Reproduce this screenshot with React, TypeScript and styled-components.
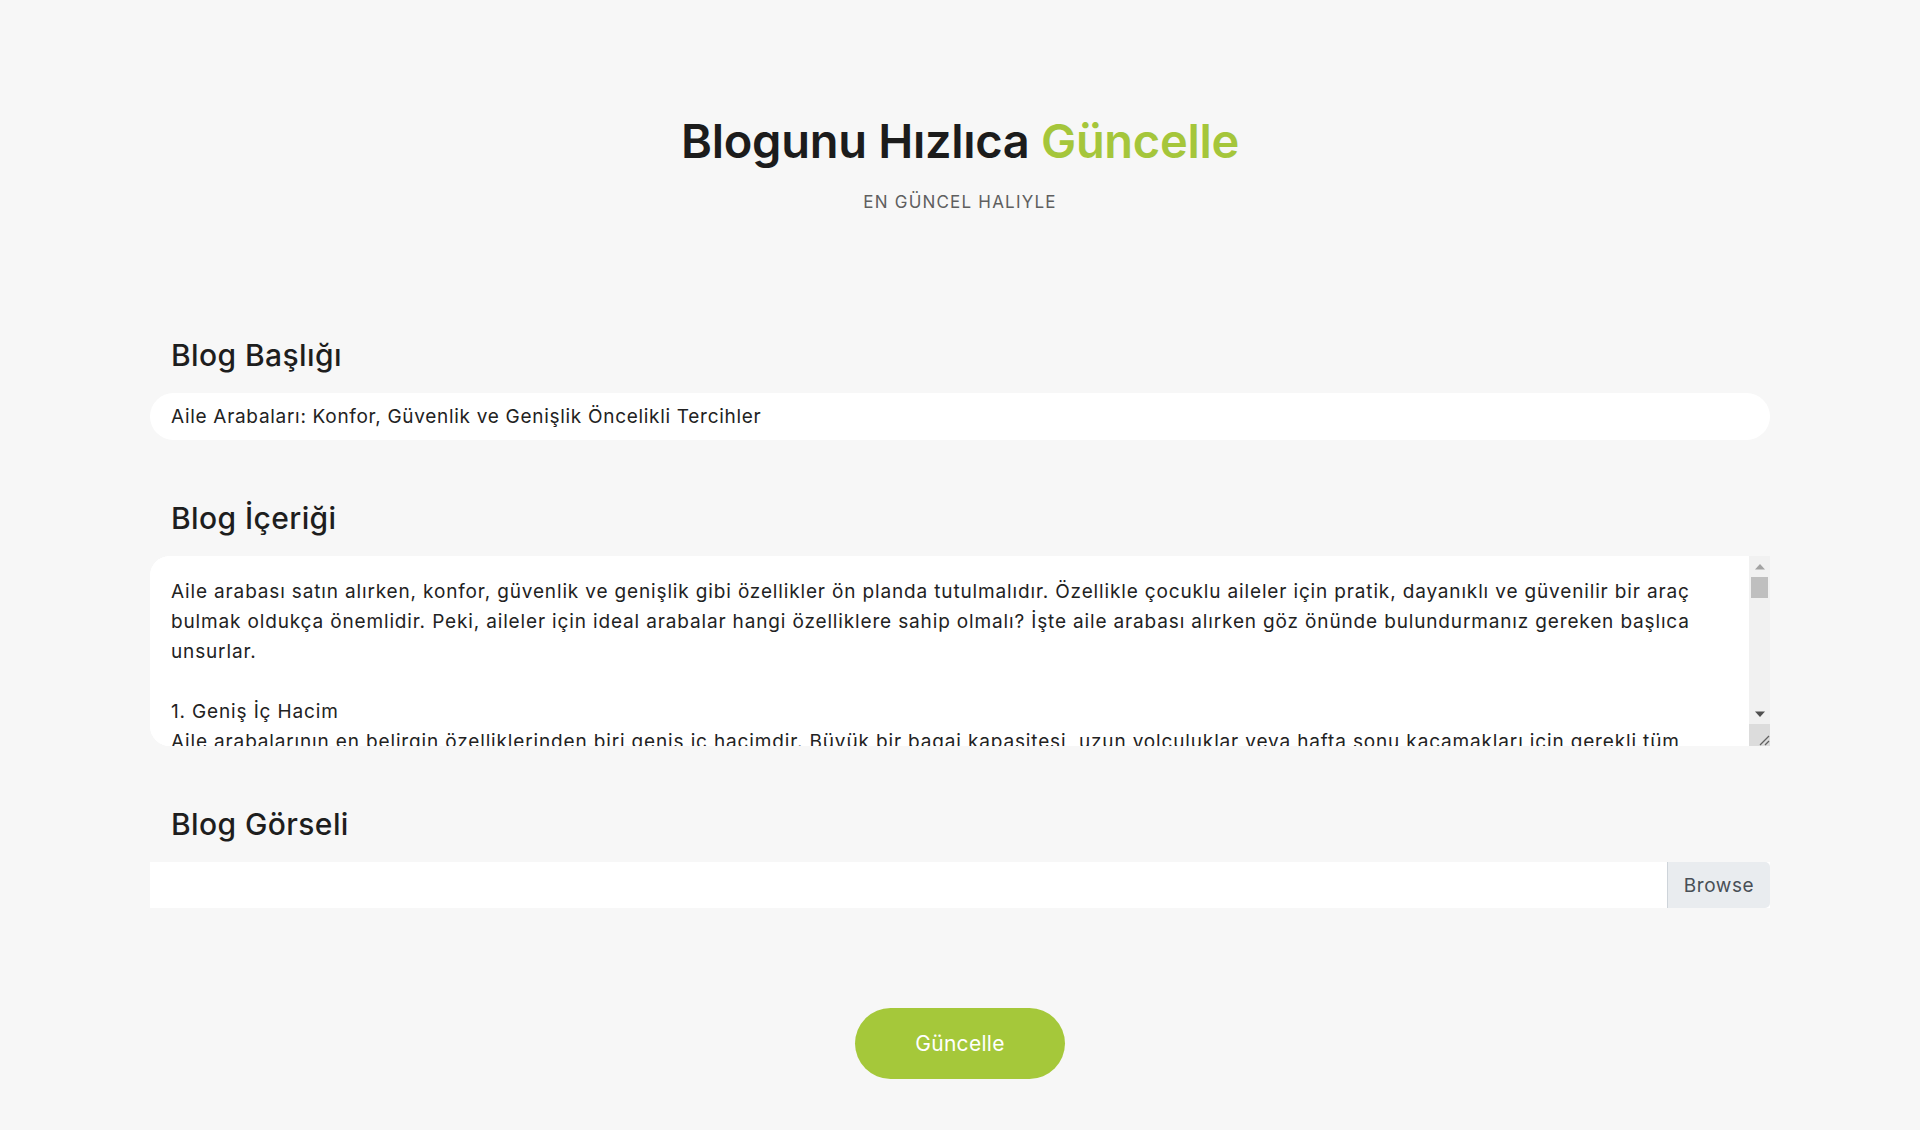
import React from "react";
import styled, { createGlobalStyle } from "styled-components";

const GlobalStyle = createGlobalStyle`
  * { box-sizing: border-box; }
  html, body { margin: 0; padding: 0; background: #f7f7f7; }
  body { font-family: Inter, "Noto Sans", sans-serif; color: #212121; }
`;

const Page = styled.main`
  min-height: 1130px;
  padding-top: 112px;
`;

const Header = styled.header`
  text-align: center;
`;

const Title = styled.h1`
  margin: 0;
  font-size: 47px;
  line-height: 58px;
  font-weight: 600;
  color: #1c1c1c;
  letter-spacing: -0.3px;
`;

const Accent = styled.span`
  color: #a5c63b;
`;

const Subtitle = styled.p`
  margin: 20px 0 0;
  font-size: 17px;
  line-height: 24px;
  letter-spacing: 1.2px;
  color: #5f5f5f;
  text-transform: uppercase;
`;

const Form = styled.form`
  width: 1620px;
  margin: 124px auto 0;
  display: flex;
  flex-direction: column;
`;

const Group = styled.div`
  display: flex;
  flex-direction: column;
  gap: 21px;
  margin-bottom: 61px;
`;

const Label = styled.label`
  padding-left: 21px;
  font-size: 30px;
  line-height: 34px;
  font-weight: 500;
  letter-spacing: 0.4px;
  color: #1e1e1e;
`;

const TextInput = styled.input`
  height: 47px;
  border: 0;
  border-radius: 24px;
  background: #fff;
  padding: 0 21px;
  font-family: Inter, "Noto Sans", sans-serif;
  font-size: 19px;
  letter-spacing: 0.7px;
  color: #222;
  outline: none;
`;

const EditorBox = styled.div`
  display: flex;
  height: 190px;
  background: #fff;
  border-radius: 20px 0 0 20px;
  overflow: hidden;
`;

const TextArea = styled.textarea`
  flex: 1;
  height: 100%;
  border: 0;
  background: #fff;
  padding: 21px 20px 0 21px;
  font-family: Inter, "Noto Sans", sans-serif;
  font-size: 19px;
  letter-spacing: 0.85px;
  line-height: 30px;
  color: #222;
  white-space: pre;
  overflow: hidden;
  scrollbar-width: none;
  outline: none;
  resize: none;
`;

const ScrollRail = styled.div`
  width: 21px;
  display: flex;
  flex-direction: column;
  background: #f1f1f1;
`;

const ArrowCell = styled.div`
  height: 21px;
  display: flex;
  align-items: center;
  justify-content: center;
`;

const Track = styled.div`
  flex: 1;
  display: flex;
  flex-direction: column;
  padding: 0 2px;
`;

const Thumb = styled.div`
  height: 21px;
  background: #bfbfbf;
`;

const ResizeCorner = styled.div`
  height: 22px;
  background: #dcdcdc;
  display: flex;
  align-items: flex-end;
  justify-content: flex-end;
`;

const FileBox = styled.div`
  display: flex;
  height: 46px;
  background: #fff;
`;

const FileName = styled.div`
  flex: 1;
`;

const BrowseButton = styled.span`
  width: 103px;
  display: flex;
  align-items: center;
  justify-content: center;
  background: #e9ecef;
  border-left: 1px solid #ced4da;
  border-radius: 0 5px 5px 0;
  font-size: 19px;
  letter-spacing: 0.6px;
  color: #495057;
`;

const Actions = styled.div`
  display: flex;
  justify-content: center;
  margin-top: 39px;
`;

const SubmitButton = styled.button`
  width: 210px;
  height: 71px;
  border: 0;
  border-radius: 36px;
  background: #a5c83a;
  color: #fff;
  font-family: Inter, "Noto Sans", sans-serif;
  font-size: 21px;
  letter-spacing: 0.3px;
  cursor: pointer;
`;

const content = [
  "Aile arabası satın alırken, konfor, güvenlik ve genişlik gibi özellikler ön planda tutulmalıdır. Özellikle çocuklu aileler için pratik, dayanıklı ve güvenilir bir araç",
  "bulmak oldukça önemlidir. Peki, aileler için ideal arabalar hangi özelliklere sahip olmalı? İşte aile arabası alırken göz önünde bulundurmanız gereken başlıca",
  "unsurlar.",
  "",
  "1. Geniş İç Hacim",
  "Aile arabalarının en belirgin özelliklerinden biri geniş iç hacimdir. Büyük bir bagaj kapasitesi, uzun yolculuklar veya hafta sonu kaçamakları için gerekli tüm",
  "eşyaların rahatça taşınmasını sağlar. Ayrıca arka koltuklarda yeterli diz ve baş mesafesi, çocuk koltuklarının kolayca yerleştirilmesine imkân tanır.",
  "",
  "2. Güvenlik Donanımları",
  "Aile arabalarında güvenlik her zaman önceliklidir. Çoklu hava yastıkları, ABS, ESP, şerit takip asistanı ve acil fren destek sistemi gibi donanımlar",
  "sürüş sırasında hem sürücüyü hem de yolcuları korur. Ayrıca ISOFIX bağlantı noktaları çocuk koltuklarının güvenle sabitlenmesini sağlar.",
  "",
  "3. Konforlu Sürüş",
  "Uzun yolculuklarda konfor, aile bireylerinin yolculuktan keyif almasını sağlar. Ayarlanabilir koltuklar, arka klima çıkışları ve sessiz bir kabin,",
  "yolculuğun daha huzurlu geçmesine katkıda bulunur.",
  "",
  "4. Yakıt Verimliliği",
  "Aileler için ekonomik bir araç seçmek, uzun vadede bütçeye önemli katkılar sağlar. Düşük yakıt tüketimine sahip motorlar ve hibrit seçenekler,",
  "günlük kullanımda ciddi tasarruf imkânı sunar.",
  "",
  "5. Pratik Kullanım Özellikleri",
  "Kayar kapılar, katlanabilir koltuklar, geniş saklama alanları ve bardaklıklar gibi pratik detaylar, aile yaşamını kolaylaştıran unsurlar arasında yer alır.",
  "",
  "Sonuç",
  "Aile arabası seçerken konfor, güvenlik ve genişlik gibi kriterleri bir arada değerlendirmek, doğru aracı bulmanıza yardımcı olur.",
].join("\n");

const UpArrow = () => (
  <svg width="10" height="6" viewBox="0 0 10 6" aria-hidden="true">
    <polygon points="5,0 10,5.5 0,5.5" fill="#a3a3a3" />
  </svg>
);

const DownArrow = () => (
  <svg width="10" height="6" viewBox="0 0 10 6" aria-hidden="true">
    <polygon points="0,0.5 10,0.5 5,6" fill="#505050" />
  </svg>
);

const GripIcon = () => (
  <svg width="12" height="12" viewBox="0 0 12 12" aria-hidden="true">
    <line x1="2" y1="11" x2="11" y2="2" stroke="#606060" strokeWidth="1.2" />
    <line x1="7" y1="11" x2="11" y2="7" stroke="#606060" strokeWidth="1.2" />
  </svg>
);

export default function App() {
  return (
    <>
      <GlobalStyle />
      <Page>
        <Header>
          <Title>
            Blogunu Hızlıca <Accent>Güncelle</Accent>
          </Title>
          <Subtitle>En Güncel Halıyle</Subtitle>
        </Header>
        <Form onSubmit={(e) => e.preventDefault()}>
          <Group>
            <Label htmlFor="title">Blog Başlığı</Label>
            <TextInput
              id="title"
              defaultValue="Aile Arabaları: Konfor, Güvenlik ve Genişlik Öncelikli Tercihler"
            />
          </Group>
          <Group>
            <Label htmlFor="content">Blog İçeriği</Label>
            <EditorBox>
              <TextArea id="content" defaultValue={content} />
              <ScrollRail aria-hidden="true">
                <ArrowCell>
                  <UpArrow />
                </ArrowCell>
                <Track>
                  <Thumb />
                </Track>
                <ArrowCell>
                  <DownArrow />
                </ArrowCell>
                <ResizeCorner>
                  <GripIcon />
                </ResizeCorner>
              </ScrollRail>
            </EditorBox>
          </Group>
          <Group>
            <Label>Blog Görseli</Label>
            <FileBox>
              <FileName />
              <BrowseButton>Browse</BrowseButton>
            </FileBox>
          </Group>
          <Actions>
            <SubmitButton type="submit">Güncelle</SubmitButton>
          </Actions>
        </Form>
      </Page>
    </>
  );
}
